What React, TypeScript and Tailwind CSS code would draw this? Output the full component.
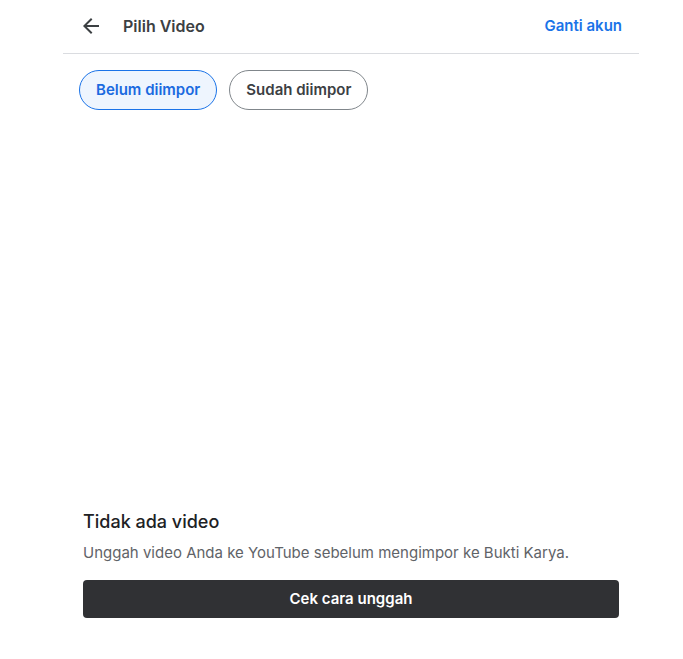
export default function App() {
  return (
    <div className="min-h-[659px] bg-white pl-[63px] font-['Inter',sans-serif]">
      <div className="flex min-h-[659px] w-[576px] flex-col">
        <div className="flex h-[54px] items-center justify-between border-b border-[#dadce0] pb-px pl-4 pr-[17px]">
          <div className="flex items-center">
            <svg width="24" height="24" viewBox="0 0 24 24" className="fill-[#3c4043]">
              <path d="M20 11H7.83l5.59-5.59L12 4l-8 8 8 8 1.41-1.41L7.83 13H20v-2z" />
            </svg>
            <span className="ml-5 text-[16px] font-semibold text-[#3c4043]">Pilih Video</span>
          </div>
          <button className="text-[15px] font-semibold text-[#1a73e8]">Ganti akun</button>
        </div>

        <div className="mt-[16px] flex gap-3 pl-4">
          <button className="h-10 rounded-full border border-[#1a73e8] bg-[#eef5fe] px-4 text-[15px] font-semibold text-[#1a6ae0]">
            Belum diimpor
          </button>
          <button className="h-10 rounded-full border border-[#80868b] bg-white px-4 text-[15px] font-semibold text-[#3c4043]">
            Sudah diimpor
          </button>
        </div>

        <div className="flex-1" />

        <div className="px-5 pb-[41px]">
          <h2 className="text-[18px] font-medium leading-6 text-[#202124]">Tidak ada video</h2>
          <p className="mt-[9px] text-[15px] leading-5 text-[#5f6368]">
            Unggah video Anda ke YouTube sebelum mengimpor ke Bukti Karya.
          </p>
          <button className="mt-[17px] h-[38px] w-full rounded bg-[#303134] text-[15px] font-semibold text-white">
            Cek cara unggah
          </button>
        </div>
      </div>
    </div>
  );
}
